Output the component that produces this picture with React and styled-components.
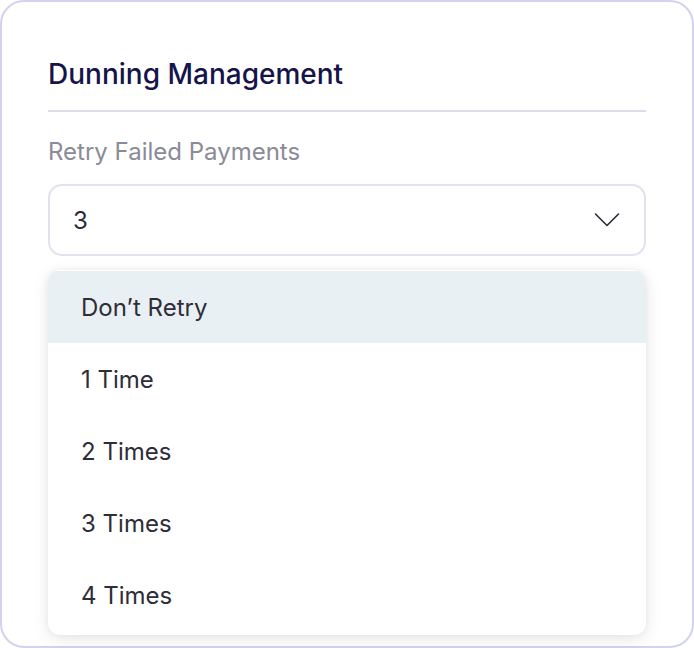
import React from "react";
import styled, { createGlobalStyle } from "styled-components";

const Global = createGlobalStyle`
  * { box-sizing: border-box; }
  html, body { margin: 0; padding: 0; background: #ffffff; }
  body { font-family: Inter, "Noto Sans", sans-serif; }
`;

const Card = styled.div`
  width: 694px;
  height: 648px;
  border: 2px solid #d3d2ef;
  border-radius: 24px;
  background: #ffffff;
  padding: 56px 46px 0 46px;
  display: flex;
  flex-direction: column;
`;

const Title = styled.h2`
  margin: 0;
  font-size: 28px;
  line-height: 32px;
  font-weight: 500;
  color: #16144a;
  padding-bottom: 20px;
  border-bottom: 2px solid #dddcec;
`;

const Label = styled.div`
  margin-top: 27px;
  font-size: 24px;
  line-height: 26px;
  color: #8b8a98;
`;

const SelectWrap = styled.div`
  position: relative;
  margin-top: 19px;
`;

const SelectBox = styled.div`
  height: 72px;
  border: 2px solid #e2e1ee;
  border-radius: 14px;
  display: flex;
  align-items: center;
  justify-content: space-between;
  padding: 0 24px 0 23px;
  font-size: 24px;
  color: #2b2a35;
`;

const Menu = styled.ul`
  position: absolute;
  left: 0;
  right: 0;
  top: calc(100% + 14px);
  margin: 0;
  padding: 1px 0 4px;
  list-style: none;
  background: #ffffff;
  border-radius: 12px;
  box-shadow: 0 4px 16px rgba(0, 0, 0, 0.1), 0 0 6px rgba(0, 0, 0, 0.04);
  overflow: hidden;
`;

const Item = styled.li`
  height: 72px;
  display: flex;
  align-items: center;
  padding-left: 33px;
  font-size: 24px;
  color: #2e2d38;
  background: ${(p) => (p.$active ? "#e9f0f3" : "transparent")};
`;

const Chevron = () => (
  <svg width="26" height="16" viewBox="0 0 26 16" fill="none">
    <path d="M1.5 2 L13 13.5 L24.5 2" stroke="#2b2a35" strokeWidth="1.6" strokeLinecap="round" strokeLinejoin="round" />
  </svg>
);

const options = ["Don’t Retry", "1 Time", "2 Times", "3 Times", "4 Times"];

export default function App() {
  return (
    <>
      <Global />
      <Card>
        <Title>Dunning Management</Title>
        <Label>Retry Failed Payments</Label>
        <SelectWrap>
          <SelectBox>
            <span>3</span>
            <Chevron />
          </SelectBox>
          <Menu>
            {options.map((o, i) => (
              <Item key={o} $active={i === 0}>{o}</Item>
            ))}
          </Menu>
        </SelectWrap>
      </Card>
    </>
  );
}
